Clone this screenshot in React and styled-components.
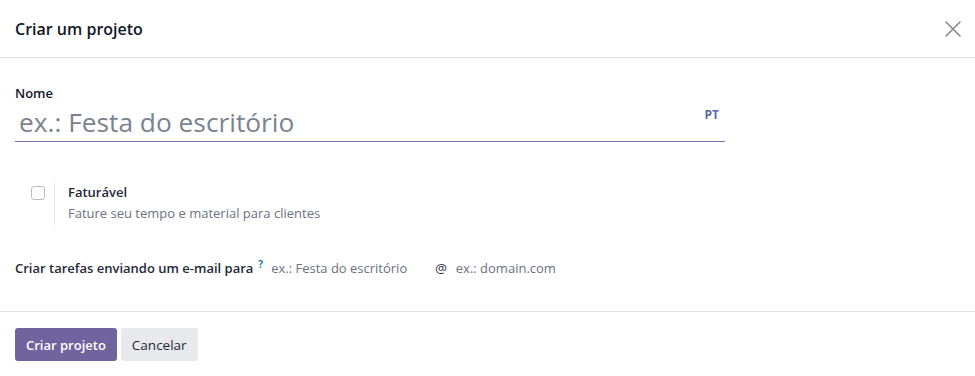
import React from 'react'
import styled, { createGlobalStyle } from 'styled-components'

const GlobalStyle = createGlobalStyle`
  html, body {
    margin: 0;
    padding: 0;
    background: #ffffff;
  }
  body {
    font-family: "Open Sans", "Noto Sans", "Liberation Sans", sans-serif;
    color: #374151;
  }
  * {
    box-sizing: border-box;
  }
`

const CloseIcon = () => (
  <svg width="16" height="16" viewBox="0 0 16 16" fill="none">
    <path d="M1 1 L15 15 M15 1 L1 15" stroke="#8a8a8a" strokeWidth="1.6" strokeLinecap="round" />
  </svg>
)

export default function App () {
  return (
    <>
      <GlobalStyle />
      <StyledModal>
        <StyledHeader>
          <StyledTitle>Criar um projeto</StyledTitle>
          <StyledCloseButton aria-label="Fechar">
            <CloseIcon />
          </StyledCloseButton>
        </StyledHeader>

        <StyledBody>
          <StyledNameField>
            <StyledLabel>Nome</StyledLabel>
            <StyledNameInputRow>
              <StyledNameInput placeholder="ex.: Festa do escritório" />
              <StyledLang>PT</StyledLang>
            </StyledNameInputRow>
          </StyledNameField>

          <StyledBillableRow>
            <StyledCheckboxCell>
              <StyledCheckbox />
            </StyledCheckboxCell>
            <StyledBillableText>
              <StyledBillableTitle>Faturável</StyledBillableTitle>
              <StyledBillableHint>Fature seu tempo e material para clientes</StyledBillableHint>
            </StyledBillableText>
          </StyledBillableRow>

          <StyledAliasRow>
            <StyledAliasLabel>
              Criar tarefas enviando um e-mail para<StyledHelp>?</StyledHelp>
            </StyledAliasLabel>
            <StyledAliasPlaceholder $width="164px">ex.: Festa do escritório</StyledAliasPlaceholder>
            <StyledAt>@</StyledAt>
            <StyledAliasPlaceholder>ex.: domain.com</StyledAliasPlaceholder>
          </StyledAliasRow>
        </StyledBody>

        <StyledFooter>
          <StyledButton $primary>Criar projeto</StyledButton>
          <StyledButton>Cancelar</StyledButton>
        </StyledFooter>
      </StyledModal>
    </>
  )
}

const StyledModal = styled.div`
  width: 975px;
  height: 376px;
  display: flex;
  flex-direction: column;
  background: #fff;
`

const StyledHeader = styled.div`
  height: 58px;
  display: flex;
  align-items: center;
  justify-content: space-between;
  padding: 0 14px 0 15px;
  border-bottom: 1px solid #dee2e6;
`

const StyledTitle = styled.h4`
  margin: 0;
  font-size: 16px;
  font-weight: 600;
  color: #111827;
`

const StyledCloseButton = styled.button`
  border: none;
  background: none;
  padding: 0;
  width: 16px;
  height: 16px;
  display: flex;
  cursor: pointer;
`

const StyledBody = styled.div`
  flex: 1;
  padding: 27px 15px 0;
  display: flex;
  flex-direction: column;
`

const StyledNameField = styled.div`
  width: 710px;
  display: flex;
  flex-direction: column;
`

const StyledLabel = styled.label`
  font-size: 13px;
  font-weight: 600;
  color: #111827;
  line-height: 17px;
`

const StyledNameInputRow = styled.div`
  display: flex;
  align-items: flex-start;
  border-bottom: 1px solid #7c6ea8;
  height: 40px;
`

const StyledNameInput = styled.input`
  flex: 1;
  border: none;
  outline: none;
  padding: 0 0 0 4px;
  height: 39px;
  font-family: inherit;
  font-size: 26.3px;
  color: #374151;
  background: transparent;

  &::placeholder {
    color: #7a8390;
  }
`

const StyledLang = styled.span`
  font-size: 12px;
  font-weight: 700;
  color: #5a6aa8;
  margin: 4px 6px 0 0;
`

const StyledBillableRow = styled.div`
  display: flex;
  margin-top: 41px;
  height: 42px;
`

const StyledCheckboxCell = styled.div`
  width: 40px;
  padding: 3px 0 0 16px;
  border-right: 1px solid #dee2e6;
`

const StyledCheckbox = styled.span`
  display: block;
  width: 14px;
  height: 14px;
  border: 1px solid #b8bcc2;
  border-radius: 3px;
`

const StyledBillableText = styled.div`
  padding-left: 13px;
  display: flex;
  flex-direction: column;
  gap: 3px;
`

const StyledBillableTitle = styled.span`
  font-size: 13px;
  font-weight: 600;
  color: #1f2937;
  line-height: 18px;
`

const StyledBillableHint = styled.span`
  font-size: 13px;
  color: #6b7280;
  line-height: 18px;
`

const StyledAliasRow = styled.div`
  display: flex;
  align-items: baseline;
  margin-top: 32px;
  font-size: 13px;
`

const StyledAliasLabel = styled.span`
  font-weight: 600;
  color: #1f2937;
  margin-right: 8px;
`

const StyledHelp = styled.sup`
  color: #0f7ca8;
  font-size: 10px;
  font-weight: 700;
  margin-left: 5px;
`

const StyledAliasPlaceholder = styled.span`
  color: #6b7280;
  width: ${({ $width }) => $width || 'auto'};
`

const StyledAt = styled.span`
  color: #1f2937;
  margin: 0 9px 0 0;
`

const StyledFooter = styled.div`
  height: 65px;
  border-top: 1px solid #dee2e6;
  display: flex;
  align-items: flex-start;
  gap: 4px;
  padding: 16px 15px 0;
`

const StyledButton = styled.button`
  height: 33px;
  padding: 0 11px;
  border: none;
  border-radius: 3px;
  font-family: inherit;
  font-size: ${({ $primary }) => ($primary ? '13px' : '13.5px')};
  font-weight: ${({ $primary }) => ($primary ? 600 : 500)};
  color: ${({ $primary }) => ($primary ? '#ffffff' : '#1f2937')};
  background: ${({ $primary }) => ($primary ? '#71639e' : '#e7e9ed')};
  cursor: pointer;
`
